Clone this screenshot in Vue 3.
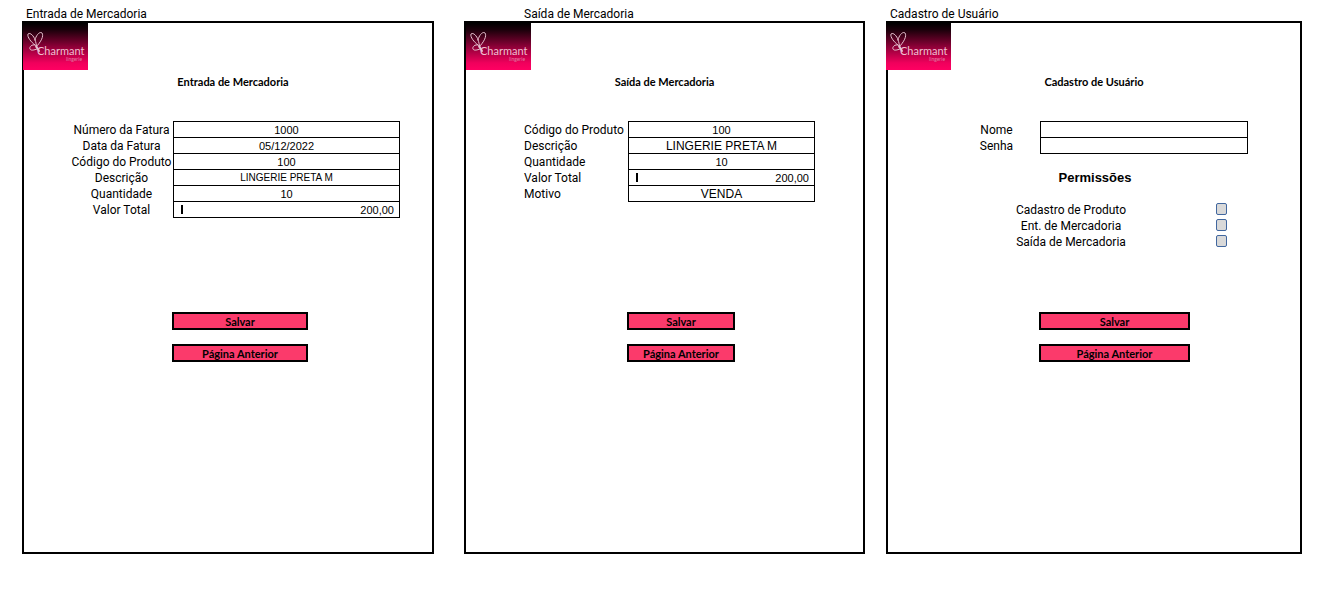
<script setup>
import { reactive } from 'vue'

const screens = reactive([
  {
    id: 'entrada',
    title: 'Entrada de Mercadoria',
    fields: [
      { label: 'Número da Fatura', value: '1000', kind: 'number' },
      { label: 'Data da Fatura', value: '05/12/2022', kind: 'number' },
      { label: 'Código do Produto', value: '100', kind: 'number' },
      { label: 'Descrição', value: 'LINGERIE PRETA M', kind: 'small' },
      { label: 'Quantidade', value: '10', kind: 'number' },
      { label: 'Valor Total', value: '200,00', kind: 'money' },
    ],
  },
  {
    id: 'saida',
    title: 'Saída de Mercadoria',
    fields: [
      { label: 'Código do Produto', value: '100', kind: 'number' },
      { label: 'Descrição', value: 'LINGERIE PRETA M' },
      { label: 'Quantidade', value: '10', kind: 'number' },
      { label: 'Valor Total', value: '200,00', kind: 'money' },
      { label: 'Motivo', value: 'VENDA' },
    ],
  },
  {
    id: 'usuario',
    title: 'Cadastro de Usuário',
    fields: [
      { label: 'Nome', value: '' },
      { label: 'Senha', value: '', type: 'password' },
    ],
    permissions: [
      { label: 'Cadastro de Produto', checked: false },
      { label: 'Ent. de Mercadoria', checked: false },
      { label: 'Saída de Mercadoria', checked: false },
    ],
  },
])
</script>

<template>
  <main class="board">
    <section v-for="s in screens" :key="s.id" class="screen" :class="s.id">
      <h2 class="caption">{{ s.title }}</h2>
      <form class="panel" @submit.prevent>
        <svg class="logo" viewBox="0 0 65 47" role="img" aria-label="Charmant Lingerie">
          <defs>
            <linearGradient :id="s.id + '-bg'" x1="0" y1="0" x2="0" y2="1">
              <stop offset="0" stop-color="#000" />
              <stop offset="0.15" stop-color="#1c000b" />
              <stop offset="0.5" stop-color="#8c0037" />
              <stop offset="0.85" stop-color="#f0005c" />
              <stop offset="1" stop-color="#ff0062" />
            </linearGradient>
          </defs>
          <rect width="65" height="47" :fill="`url(#${s.id}-bg)`" />
          <g fill="none" stroke="#e6c3d0" stroke-width="1" stroke-linecap="round">
            <path d="M12 22C8 19 4 14 5 11C7 9 11 13 12 17C13 19 13 21 14 25" />
            <path d="M12 17C13 12 17 8 19 10C21 13 18 19 13 24" />
            <path d="M12 22C9 21 6 24 7 26C8 28 11 27 14 26" />
            <path d="M13 23L16 28" stroke-width="2" />
          </g>
          <text class="brand" x="14" y="32" fill="#f0bfd0">Charmant</text>
          <text class="sub" x="43" y="38" fill="#e07fa2">lingerie</text>
        </svg>
        <h1 class="heading">{{ s.title }}</h1>

        <div class="body">
          <div class="fields">
            <div v-for="(f, i) in s.fields" :key="f.label" class="row">
              <label :for="`${s.id}-${i}`">{{ f.label }}</label>
              <div class="cell">
                <span v-if="f.kind === 'money'" class="mark" aria-hidden="true"></span>
                <input
                  :id="`${s.id}-${i}`"
                  v-model="f.value"
                  :type="f.type || 'text'"
                  :class="f.kind"
                />
              </div>
            </div>
          </div>

          <fieldset v-if="s.permissions" class="permissions">
            <legend>Permissões</legend>
            <div v-for="(p, i) in s.permissions" :key="p.label" class="permission">
              <label :for="`permissao-${i}`">{{ p.label }}</label>
              <input :id="`permissao-${i}`" v-model="p.checked" type="checkbox" />
            </div>
          </fieldset>
        </div>

        <div class="actions">
          <button type="submit">Salvar</button>
          <button type="button">Página Anterior</button>
        </div>
      </form>
    </section>
  </main>
</template>

<style>
body {
  margin: 0;
  background: #fff;
}
</style>

<style scoped>
* {
  box-sizing: border-box;
}
.board {
  display: flex;
  align-items: stretch;
  padding: 7px 28px 48px 22px;
  font: 12px/16px Roboto, "Liberation Sans", Arial, sans-serif;
  color: #000;
}
.screen {
  min-width: 0;
}
.entrada {
  flex: 412 1 0;
  margin-right: 30px;
}
.saida {
  flex: 401 1 0;
  margin-right: 21px;
}
.usuario {
  flex: 416 1 0;
}
.caption {
  margin: 0;
  padding-left: 4px;
  font-size: 12px;
  font-weight: 400;
  line-height: 14px;
}
.saida .caption {
  padding-left: 60px;
}
.panel {
  border: 2px solid #000;
  padding-bottom: 190px;
}
.logo {
  display: block;
  width: 65px;
  height: 47px;
}
.entrada .logo {
  margin-left: -1px;
}
.usuario .logo {
  margin-left: -2px;
}
.brand {
  font: 11px Lato, sans-serif;
}
.sub {
  font: 5px Lato, sans-serif;
}
.heading {
  margin: 4px 0 31px;
  font: 700 11px/16px Lato, sans-serif;
  text-align: center;
}
.entrada .heading {
  padding-left: 10px;
}
.body {
  min-height: 191px;
}
.entrada .fields {
  margin: 0 32px 0 46px;
}
.saida .fields {
  margin: 0 48px 0 58px;
}
.usuario .fields {
  margin: 0 52px 0 65px;
}
.row {
  display: flex;
  height: 16px;
}
.row label {
  flex: none;
  width: 103px;
  line-height: 18px;
  text-align: center;
  white-space: nowrap;
}
.saida .row label {
  width: 104px;
  text-align: left;
}
.usuario .row label {
  width: 87px;
}
.cell {
  flex: 1;
  display: flex;
  align-items: center;
  min-width: 0;
  height: 17px;
  border: 1px solid #000;
}
.cell input {
  flex: 1;
  min-width: 0;
  height: 15px;
  border: 0;
  padding: 0 5px;
  background: transparent;
  color: #000;
  font: 12px "Liberation Sans", Arial, sans-serif;
  text-align: center;
  outline: none;
}
.cell .number {
  font-size: 11px;
}
.cell .money {
  font-size: 11px;
  text-align: right;
}
.cell .small {
  font-size: 10px;
}
.mark {
  width: 2px;
  height: 9px;
  margin-left: 7px;
  background: #000;
}
.permissions {
  margin: 16px 0 0;
  border: 0;
  padding: 0;
}
.permissions legend {
  width: 100%;
  margin-bottom: 15px;
  padding: 0 0 0 2px;
  font: 700 13px/18px "Liberation Sans", Arial, sans-serif;
  text-align: center;
}
.permission {
  display: flex;
  align-items: center;
  height: 16px;
  margin: 0 73px 0 113px;
}
.permission label {
  width: 140px;
  text-align: center;
}
.permission input {
  appearance: none;
  width: 11px;
  height: 12px;
  margin: 0 0 3px auto;
  border: 1px solid #41679f;
  border-radius: 2px;
  background: #d9d9d9;
}
.permission input:checked {
  background: #41679f;
}
.actions {
  display: grid;
  gap: 14px;
}
.entrada .actions {
  margin: 0 124px 0 148px;
}
.saida .actions {
  margin: 0 128px 0 161px;
}
.usuario .actions {
  margin: 0 110px 0 151px;
}
.actions button {
  height: 18px;
  border: 2px solid #000;
  padding: 0;
  background: #fb3a6b;
  color: #000;
  font: 700 11px/16px Lato, sans-serif;
  cursor: pointer;
}
</style>
